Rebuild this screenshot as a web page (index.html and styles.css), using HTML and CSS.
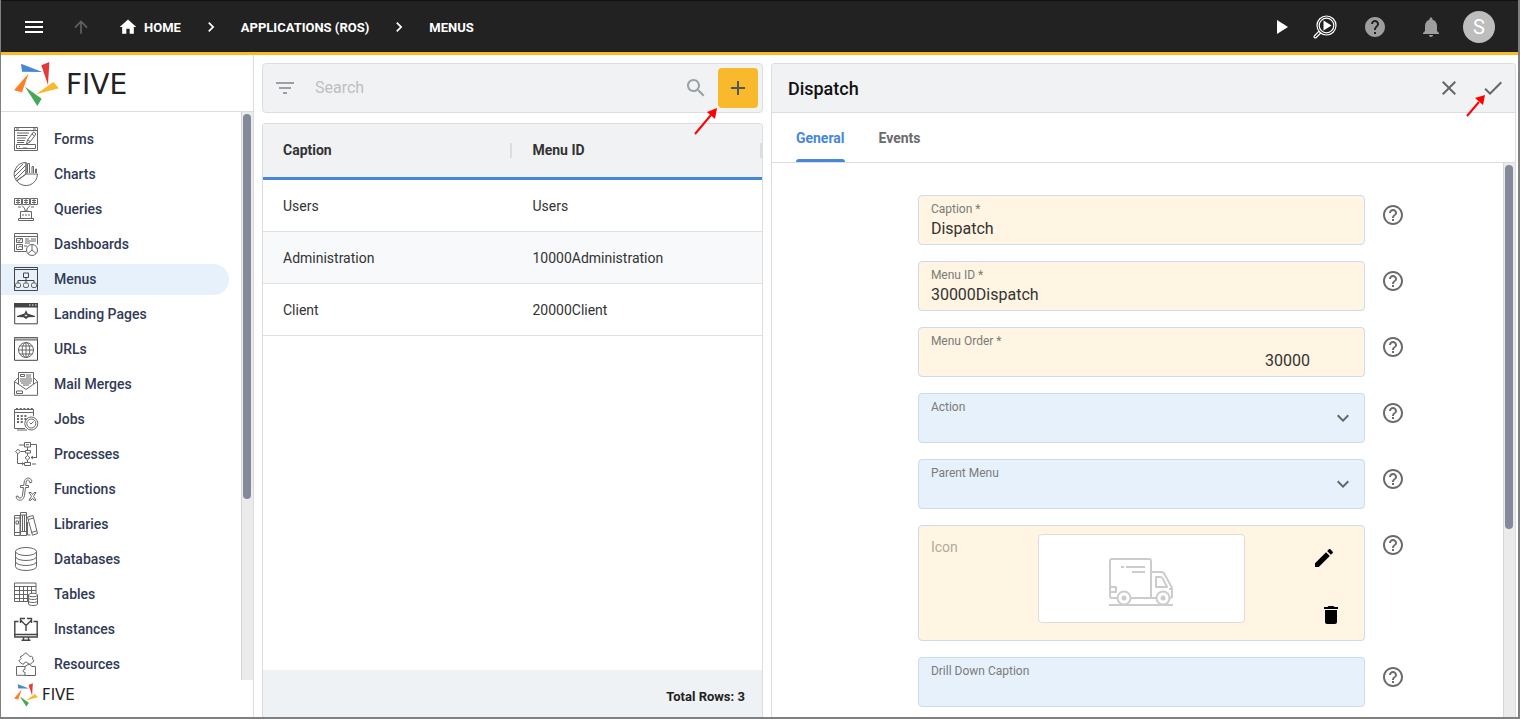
FILE: index.html
```html
<!DOCTYPE html>
<html lang="en">
<head>
<meta charset="utf-8">
<meta name="viewport" content="width=device-width, initial-scale=1">
<title>Five - Menus</title>
<link rel="stylesheet" href="styles.css">
</head>
<body>
<svg class="defs" aria-hidden="true">
  <symbol id="help" viewBox="0 0 24 24"><path d="M11 18h2v-2h-2v2zm1-16C6.48 2 2 6.48 2 12s4.480 10 10 10 10-4.480 10-10S17.520 2 12 2zm0 18c-4.410 0-8-3.590-8-8s3.590-8 8-8 8 3.590 8 8-3.590 8-8 8zm0-14c-2.210 0-4 1.790-4 4h2c0-1.100.9-2 2-2s2 .9 2 2c0 2-3 1.750-3 5h2c0-2.250 3-2.500 3-5 0-2.210-1.790-4-4-4z"/></symbol>
  <symbol id="next" viewBox="0 0 24 24"><path d="M10 6 8.590 7.410 13.170 12l-4.580 4.590L10 18l6-6z"/></symbol>
  <symbol id="down" viewBox="0 0 24 24"><path d="M7.410 8.590 12 13.170l4.590-4.580L18 10l-6 6-6-6z"/></symbol>
  <symbol id="mark" viewBox="42 186 135 132">
    <path fill="#4587d9" d="M63 191l64 25-61-1z"/><path fill="#e53935" d="M124 196l24-10-4 69z"/>
    <path fill="#f8b92c" d="M108 283l52-37 17 19z"/><path fill="#43a958" d="M75 260l50 36-13 22z"/>
    <path fill="#ff7f27" d="M86 220l-20 57-24-6z"/>
  </symbol>
</svg>
<div class="app">
  <header class="topbar">
    <button class="icon-btn" aria-label="Menu"><svg class="i24" viewBox="0 0 24 24"><path d="M3 18h18v-2H3zm0-5h18v-2H3zm0-7v2h18V6z"/></svg></button>
    <button class="icon-btn up" aria-label="Up"><svg class="i20" viewBox="0 0 24 24"><path d="m4 12 1.410 1.410L11 7.830V20h2V7.830l5.580 5.590L20 12l-8-8z"/></svg></button>
    <nav class="crumbs" aria-label="Breadcrumb">
      <a href="#" class="home"><svg class="i20" viewBox="0 0 24 24"><path d="M10 20v-6h4v6h5v-8h3L12 3 2 12h3v8z"/></svg>HOME</a>
      <svg class="i20"><use href="#next"/></svg>
      <a href="#">APPLICATIONS (ROS)</a>
      <svg class="i20"><use href="#next"/></svg>
      <a href="#">MENUS</a>
    </nav>
    <div class="tools">
      <button class="icon-btn" aria-label="Run"><svg class="i24" viewBox="0 0 24 24"><path d="M8 5v14l11-7z"/></svg></button>
      <button class="icon-btn" aria-label="Inspect"><svg class="i24" viewBox="0 0 24 24"><g fill="none" stroke="#fff"><circle cx="13.500" cy="10.500" r="9.500" stroke-width="1.200"/><circle cx="13.500" cy="10.500" r="7.300" stroke-width="1.200"/><path d="M6 16.200 1.300 21c-.8 1 .7 2.500 1.700 1.700L7.800 18" stroke-width="1.200"/></g><path d="M10.500 5.500v10l8-5z"/></svg></button>
      <button class="icon-btn help-btn" aria-label="Help"><svg class="i24" viewBox="0 0 24 24"><path d="M12 2C6.480 2 2 6.480 2 12s4.480 10 10 10 10-4.480 10-10S17.520 2 12 2zm1 17h-2v-2h2v2zm2.070-7.750-.9.920C13.450 12.900 13 13.500 13 15h-2v-.5c0-1.100.45-2.100 1.170-2.830l1.240-1.260c.37-.36.590-.86.590-1.410 0-1.100-.9-2-2-2s-2 .9-2 2H8c0-2.210 1.790-4 4-4s4 1.790 4 4c0 .88-.36 1.680-.93 2.250z"/></svg></button>
      <button class="icon-btn bell" aria-label="Notifications"><svg class="i24" viewBox="0 0 24 24"><path d="M12 22c1.100 0 2-.9 2-2h-4c0 1.100.89 2 2 2zm6-6v-5c0-3.070-1.640-5.640-4.500-6.320V4c0-.83-.67-1.500-1.500-1.500s-1.500.67-1.500 1.500v.68C7.630 5.360 6 7.920 6 11v5l-2 2v1h16v-1z"/></svg></button>
      <button class="avatar" aria-label="Account">S</button>
    </div>
  </header>

  <div class="body">
    <aside class="side">
      <a class="brand" href="#"><svg class="brand-mark"><use href="#mark"/></svg><span>FIVE</span></a>
      <div class="scroll-row">
        <nav class="nav" aria-label="Application">
          <a href="#"><svg viewBox="0 0 24 24"><path d="M.5.500h23v23H.500zM.500 3.500h23M2 2h3M19 2h3M2.500 17.500h19v4h-19zM3 6h12M3 8.500h10.500M3 11h9M3 13.500h8M3 15.500h7M12.500 17l1-4 6-8 2.500 2-6 8zM18 7l2.500 2M14 13l2 1.500M5 19.500h1M9 21h4"/></svg>Forms</a>
          <a href="#"><svg viewBox="0 0 24 24"><path d="M12 .5A11.500 11.500 0 0 0 2.500 18.800L12 12zM12 12h11.500A11.500 11.500 0 0 1 2.800 19zM1 10l8-8M1 14 11.500 3.500M2 17l9.500-9.500M13.500 11V1.500h2V11M18 11V4.500h1.500V11M21.500 11V7h1v4M12 12V.500"/></svg>Charts</a>
          <a href="#"><svg viewBox="0 0 24 24"><path d="M.5 1.500h7v6h-7zM8.500 1.500h7v6h-7zM16.500 1.500h7v6h-7zM2 3.500h4M10 3.500h4M18 3.500h4M2 5.500h4M10 5.500h4M18 5.500h4M4 1v7M12 1v7M20 1v7M8 8.500l3 3.500v2h2v-2l3-3.500M6.500 14.500h11v7h-11zM4.500 21.500h15v2h-15zM8 18h2M11 18h2M14 18h2M4 10h3M17 10h3"/></svg>Queries</a>
          <a href="#"><svg viewBox="0 0 24 24"><path d="M12 19.500H.500v-18h23v11M.500 4.500h23M2.500 6.500h6v4h-6zM2.500 12.500h6v5h-6zM3.500 8l1.500 1.500L8 6M4 15.500l2-1.500 2 1M11 7h4M17 7h5M11 9h11M11 11h5M10 14h3"/><circle cx="18" cy="18" r="5.500"/><path d="M18 12.500V18l-4 3.500M18 18l4 3.500"/></svg>Dashboards</a>
          <a href="#" class="active" aria-current="page"><svg viewBox="0 0 24 24"><path class="strong" d="M.5.500h23v23H.500zM0 2.500h24"/><path class="strong" d="M9.500 6h5v4.500h-5zM12 10.500V16M4 16v-2.500h16V16"/><rect x="1.500" y="16" width="5" height="4.500" rx="1.500"/><rect x="9.500" y="16" width="5" height="4.500" rx="1.500"/><rect x="17.500" y="16" width="5" height="4.500" rx="1.500"/></svg>Menus</a>
          <a href="#"><svg viewBox="0 0 24 24"><path class="strong" d="M.7 1.500h22.600v20.300H.7z"/><path class="solid" d="M0 1h24v4.500H0z"/><path stroke="#fff" d="M15 3h1.500M18 3h1.500M21 3h1.500"/><path class="solid" d="m12 8 1.500 3.500L21 14v1l-6.500.3L12 17l-2.500-1.700L3 15v-1l7.500-2.500z"/><circle cx="12" cy="13.500" r="1.200" fill="#fff"/></svg>Landing Pages</a>
          <a href="#"><svg viewBox="0 0 24 24"><path class="strong" d="M.5.500h23v22.800H.500z"/><path fill="#bbb" d="M.5.500h23v2.500H.500z"/><circle cx="12" cy="13" r="7.500"/><ellipse cx="12" cy="13" rx="3.800" ry="7.500"/><path d="M12 5.500v15M4.500 13h15M6 9h12M6 17h12"/></svg>URLs</a>
          <a href="#"><svg viewBox="0 0 24 24"><path d="M4.500 12V.500h15V12M.500 9.500v13.800h23V9.500L12 17.500zM.500 9.500l4-4M23.500 9.500l-4-4M2.500 19h6v2.500h-6zM6.500 2.500h4v2h-4zM12 3h5M12 5h5M6 7h12M6 9h12M7 11h10M9 13h6"/></svg>Mail Merges</a>
          <a href="#"><svg viewBox="0 0 24 24"><path d="M11 21.500H.500v-19h19V9M.500 5.500h19M3 23h10"/><path stroke-width="2" stroke-dasharray="2 1.700" d="M3 9h11M3 12h10M3 15h7M2 2h17"/><circle cx="17.300" cy="16.500" r="6.500"/><circle cx="17.300" cy="16.500" r="4.500"/><path d="M15.500 15.500l1.500 1.500 2.500-2.500"/></svg>Jobs</a>
          <a href="#"><svg viewBox="0 0 24 24"><path d="M10.500.500h6v4.500h-6zM12 2.700h3M5 3h5M17 2.500h5.500v13H19M13.500 5v3.500M11.500 8.500h5v2.500h-5zM6.500 9.500h5M4 7.300 6.300 9.500 4 11.800 1.500 9.500zM13.500 11v2.500M13.500 13.500l2.500 2.300-2.500 2.200-2.500-2.200zM17 15.500h6M13.500 18v2M10.500 20.500h6v3h-6zM3.500 12v9.500H10M18 22h4M19 14l-2 1.500 2 1.500M8 20.500l1.500 1.200L8 23"/></svg>Processes</a>
          <a href="#"><svg viewBox="0 0 24 24"><path d="M17.500 5.500c1.600-4.500-6-7-7.300-.5L9.700 8.500H6.500v2h3L8.500 18c-.5 4-4.500 4-4.300 1.200H2.300c-.7 5 7.200 6.200 8.200-.9l1-7.800h3v-2h-2.800l.5-3.400c.6-3.500 3.400-2.500 3.300.4zM15 15.500h2l1.500 2 1.500-2h2l-2.500 3.800 2.500 3.900h-2l-1.500-2-1.500 2h-2l2.500-3.900z"/></svg>Functions</a>
          <a href="#"><svg viewBox="0 0 24 24"><path d="M.5 3.500h5.500v20H.500zM6.500.500h6v23h-6zM13.500 5l5.500-1.500 4.500 18-5 1.700zM.500 6h5.500M.500 20.500h5.500M2 9h2.500v3H2zM6.500 3h6M6.500 19.500h6M8.500 3v16.500M10.500 3v16.500M14.200 7.500l5.500-1.500M17.500 20.500l5.500-1.700M13.500 10v13h3"/></svg>Libraries</a>
          <a href="#"><svg viewBox="0 0 24 24"><ellipse cx="12" cy="4.500" rx="10.500" ry="4"/><path d="M1.500 4.500v15c0 5.300 21 5.300 21 0v-15M1.500 9.500c0 5.300 21 5.300 21 0M1.500 14.500c0 5.300 21 5.300 21 0"/></svg>Databases</a>
          <a href="#"><svg viewBox="0 0 24 24"><path d="M14 19.500H.500V1h21.500v10M.500 4.500h21.500M5.500 4.500v15M9.500 4.500v15M13.500 4.500v15M17.500 4.500V11M.500 8.500h21.500M.500 12.500h14M.500 16.500h14"/><ellipse cx="19" cy="13" rx="4.500" ry="1.800"/><path d="M14.500 13v9c0 2 9 2 9 0v-9M14.500 16c0 2 9 2 9 0M14.500 19c0 2 9 2 9 0"/></svg>Tables</a>
          <a href="#"><svg viewBox="0 0 24 24"><path class="strong" stroke-width="1.400" d="M4.500 4.500H.800v15.500h22.400V4.500h-3.700M0 17.500h24M9.500 20v3M14.500 20v3M7.500 23.300h9M12 14V8.500L7 3.500M12 8.500l5-5M6.500 6V1.500H11M17.500 6V1.500H13"/></svg>Instances</a>
          <a href="#"><svg viewBox="0 0 24 24"><path d="M12 .7 16 4.500c2-1 3.500 1 2.500 2.500l1.500 2-3.500 3H14c.3-2.500-4.300-2.500-4 0H8L4.700 9l2.500-2.500L6 5l2-1z"/><path d="M2.500 14.500H11v3c-2.500-.8-2.500 3.500 0 2.800v3H2.500zM11 14.500l4-2.500 3 2.500h3.500v9H11"/></svg>Resources</a>
        </nav>
        <div class="track" aria-hidden="true"><div class="thumb side-thumb"></div></div>
      </div>
      <div class="side-foot"><svg class="foot-mark"><use href="#mark"/></svg><span>FIVE</span></div>
    </aside>

    <main class="main">
      <section class="list">
        <div class="search">
          <button class="icon-btn filter" aria-label="Filter"><svg class="i24" viewBox="0 0 24 24"><path d="M10 18h4v-2h-4zM3 6v2h18V6zm3 7h12v-2H6z"/></svg></button>
          <input type="search" placeholder="Search" aria-label="Search">
          <svg class="i24 find" viewBox="0 0 24 24"><path d="M15.500 14h-.79l-.28-.27C15.410 12.590 16 11.110 16 9.500 16 5.910 13.090 3 9.500 3S3 5.910 3 9.500 5.910 16 9.500 16c1.610 0 3.090-.59 4.230-1.570l.27.28v.79l5 4.990L20.490 19zm-6 0C7.010 14 5 11.990 5 9.500S7.010 5 9.500 5 14 7.010 14 9.500 11.990 14 9.500 14z"/></svg>
          <div class="add-wrap">
            <button class="add" aria-label="Add menu"><svg class="i24" viewBox="0 0 24 24"><path d="M19 13h-6v6h-2v-6H5v-2h6V5h2v6h6z"/></svg></button>
            <svg class="pointer add-pointer" viewBox="0 0 24 28" aria-hidden="true"><path d="M1 27 17 8" stroke="red" stroke-width="2"/><path d="M23 1l-2 11-8-7z" fill="red"/></svg>
          </div>
        </div>
        <div class="card">
          <table>
            <thead><tr><th scope="col"><span>Caption</span></th><th scope="col"><span>Menu ID</span></th></tr></thead>
            <tbody>
              <tr><td>Users</td><td>Users</td></tr>
              <tr><td>Administration</td><td>10000Administration</td></tr>
              <tr><td>Client</td><td>20000Client</td></tr>
            </tbody>
          </table>
          <div class="total">Total Rows: 3</div>
        </div>
      </section>

      <section class="detail">
        <div class="detail-head">
          <h1>Dispatch</h1>
          <button class="icon-btn" aria-label="Cancel"><svg class="i24" viewBox="0 0 24 24"><path d="M19 6.410 17.590 5 12 10.590 6.410 5 5 6.410 10.590 12 5 17.590 6.410 19 12 13.410 17.590 19 19 17.590 13.410 12z"/></svg></button>
          <div class="save-wrap">
            <button class="icon-btn" aria-label="Save"><svg class="i24" viewBox="0 0 24 24"><path d="M9 16.170 4.830 12l-1.420 1.410L9 19 21 7l-1.410-1.410z"/></svg></button>
            <svg class="pointer save-pointer" viewBox="0 0 22 24" aria-hidden="true"><path d="M2 22 14 8" stroke="red" stroke-width="2"/><path d="M20 1l-2 10-8-7z" fill="red"/></svg>
          </div>
        </div>
        <div class="tabs" role="tablist">
          <button role="tab" aria-selected="true">General</button>
          <button role="tab" aria-selected="false">Events</button>
        </div>
        <div class="scroll-row">
          <form class="form">
            <div class="row">
              <div class="field need"><label for="caption">Caption *</label><input id="caption" type="text" value="Dispatch"></div>
              <button type="button" class="icon-btn hint" aria-label="Help on Caption"><svg class="i24"><use href="#help"/></svg></button>
            </div>
            <div class="row">
              <div class="field need"><label for="menuid">Menu ID *</label><input id="menuid" type="text" value="30000Dispatch"></div>
              <button type="button" class="icon-btn hint" aria-label="Help on Menu ID"><svg class="i24"><use href="#help"/></svg></button>
            </div>
            <div class="row">
              <div class="field need"><label for="order">Menu Order *</label><input id="order" class="num" type="text" inputmode="numeric" value="30000"></div>
              <button type="button" class="icon-btn hint" aria-label="Help on Menu Order"><svg class="i24"><use href="#help"/></svg></button>
            </div>
            <div class="row">
              <div class="field"><label for="action">Action</label><select id="action"><option></option></select><svg class="i24 caret"><use href="#down"/></svg></div>
              <button type="button" class="icon-btn hint" aria-label="Help on Action"><svg class="i24"><use href="#help"/></svg></button>
            </div>
            <div class="row">
              <div class="field"><label for="parent">Parent Menu</label><select id="parent"><option></option></select><svg class="i24 caret"><use href="#down"/></svg></div>
              <button type="button" class="icon-btn hint" aria-label="Help on Parent Menu"><svg class="i24"><use href="#help"/></svg></button>
            </div>
            <div class="row">
              <div class="field need picture">
                <span class="picture-label">Icon</span>
                <div class="preview">
                  <svg viewBox="0 0 64 48" role="img" aria-label="Delivery truck"><g fill="none" stroke="#ccc" stroke-width="2" stroke-linejoin="round"><path d="M8 40H3q-2 0-2-2V3q0-2 2-2h37q2 0 2 2v37H22M42 14h10q3 0 4 3l6 11q1 1 1 3v7q0 2-2 2M47 19h5q1 0 2 2l4 8H47zM42 40h5M1 29h6v5H1M60 31h3"/><circle cx="15" cy="40" r="6.500"/><circle cx="54" cy="40" r="6.500"/><path d="M0 47h64M12 9h3M17 9h19M23 14h13"/></g><g fill="#ccc"><circle cx="15" cy="40" r="2.500"/><circle cx="54" cy="40" r="2.500"/></g></svg>
                </div>
                <div class="picture-tools">
                  <button type="button" class="icon-btn" aria-label="Edit icon"><svg class="i24" viewBox="0 0 24 24"><path d="M3 17.250V21h3.750L17.810 9.940l-3.750-3.750zM20.710 7.040c.39-.39.390-1.020 0-1.410l-2.340-2.340c-.39-.39-1.020-.39-1.410 0l-1.830 1.830 3.750 3.750z"/></svg></button>
                  <button type="button" class="icon-btn" aria-label="Delete icon"><svg class="i24" viewBox="0 0 24 24"><path d="M6 19c0 1.100.9 2 2 2h8c1.100 0 2-.9 2-2V7H6zM19 4h-3.500l-1-1h-5l-1 1H5v2h14z"/></svg></button>
                </div>
              </div>
              <button type="button" class="icon-btn hint" aria-label="Help on Icon"><svg class="i24"><use href="#help"/></svg></button>
            </div>
            <div class="row">
              <div class="field"><label for="drill">Drill Down Caption</label><input id="drill" type="text"></div>
              <button type="button" class="icon-btn hint" aria-label="Help on Drill Down Caption"><svg class="i24"><use href="#help"/></svg></button>
            </div>
          </form>
          <div class="track" aria-hidden="true"><div class="thumb form-thumb"></div></div>
        </div>
      </section>
    </main>
  </div>
</div>
</body>
</html>
```
FILE: styles.css
```css
* { box-sizing: border-box; }
body { margin: 0; font-family: Roboto, "Liberation Sans", sans-serif; font-size: 14px; color: #333; background: #fff; }
button, input, select { font: inherit; color: inherit; margin: 0; padding: 0; border: 0; background: none; }
button { cursor: pointer; }
a { color: inherit; text-decoration: none; }
svg { display: block; flex: none; fill: currentColor; }
.defs { position: absolute; width: 0; height: 0; }
.i24 { width: 24px; height: 24px; }
.i20 { width: 20px; height: 20px; }
.icon-btn { display: flex; flex: none; }

.app { height: 100vh; display: flex; flex-direction: column; border: solid #808080; border-width: 0 2px 2px 1px; overflow: hidden; }

.topbar { flex: none; height: 55px; display: flex; align-items: center; padding: 1px 23px 0 21px; background: #222; border-top: 1px solid #111; border-bottom: 3px solid #fbb829; color: #fff; }
.up { margin-left: 25px; color: #616161; }
.crumbs { display: flex; align-items: center; margin-left: 27px; font-size: 13px; font-weight: 700; }
.crumbs a { display: flex; align-items: center; gap: 6px; }
.crumbs > svg { margin: 0 20px; }
.tools { display: flex; align-items: center; gap: 20px; margin-left: auto; }
.help-btn { margin-left: 6px; color: #9e9e9e; }
.bell { margin-left: 12px; color: #9e9e9e; }
.avatar { width: 32px; height: 32px; border-radius: 50%; background: #bdbdbd; color: #fff; font-size: 20px; line-height: 32px; }

.body { flex: 1; min-height: 0; display: flex; }
.side { flex: none; width: 253px; display: flex; flex-direction: column; border-right: 1px solid #ddd; }
.brand { flex: none; height: 57px; display: flex; align-items: center; gap: 7px; padding: 2px 0 0 13px; border-bottom: 1px solid #ddd; color: #222; font: 28px "DejaVu Sans", sans-serif; }
.brand-mark { width: 45px; height: 44px; }
.scroll-row { flex: 1; min-height: 0; display: flex; }
.nav { flex: 1; display: flex; flex-direction: column; gap: 4px; padding: 12px 12px 0 0; overflow: hidden; }
.nav a { flex: none; height: 31px; display: flex; align-items: center; gap: 16px; padding: 0 0 1px 13px; border-radius: 0 16px 16px 0; color: #313a55; font-weight: 500; }
.nav .active { background: #e7f1fc; }
.nav svg { width: 24px; height: 24px; fill: none; stroke: #666; overflow: visible; }
.nav .strong { stroke: #444; }
.nav .solid { fill: #444; stroke: none; }
.track { flex: none; width: 12px; padding: 2px 0 0 1px; background: #ebebeb; border-left: 1px solid #d5d5d5; }
.thumb { width: 8px; border-radius: 4px; background: #848a9b; }
.side-thumb { height: 68%; }
.form-thumb { height: 66%; }
.side-foot { flex: none; height: 37px; display: flex; align-items: flex-start; gap: 4px; padding: 3px 0 0 13px; color: #222; font: 15px/24px "DejaVu Sans", sans-serif; }
.foot-mark { width: 24px; height: 24px; }

.main { flex: 1; min-width: 0; display: grid; grid-template-columns: minmax(0, 402fr) minmax(0, 598fr); gap: 8px; padding: 8px 2px 0 8px; }
.list { min-height: 0; display: flex; flex-direction: column; gap: 10px; }
.search { flex: none; height: 50px; display: flex; align-items: center; padding: 0 4px 0 10px; background: #f1f2f4; border: 1px solid #ddd; border-radius: 4px; }
.filter { color: #9aa0a6; }
.search input { flex: 1; min-width: 0; height: 40px; padding-bottom: 2px; margin-left: 18px; font-size: 16px; outline: 0; }
.search input::placeholder { color: #bdbfc2; opacity: 1; }
.find { margin-right: 10px; color: #9aa0a6; }
.add-wrap, .save-wrap { position: relative; }
.add { width: 40px; height: 40px; display: grid; place-items: center; border-radius: 4px; background: #f8b92c; color: #555; }
.pointer { position: absolute; pointer-events: none; }
.add-pointer { width: 24px; height: 28px; right: 40px; top: 39px; }
.save-pointer { width: 22px; height: 24px; right: 18px; top: 18px; }

.card { flex: 1; min-height: 0; display: flex; flex-direction: column; border: 1px solid #ddd; border-bottom: 0; border-radius: 4px 4px 0 0; overflow: hidden; }
table { width: 100%; border-spacing: 0; table-layout: fixed; }
th, td { padding: 0 0 0 20px; text-align: left; }
th { height: 56px; background: #f1f2f4; border-bottom: 3px solid #4587d9; font-weight: 700; color: #333; }
th span { display: block; border-right: 2px solid #ddd; line-height: 15px; }
td { height: 52px; border-bottom: 1px solid #e0e0e0; }
tbody tr:nth-child(even) { background: #f8f9fb; }
.total { margin-top: auto; height: 47px; padding-right: 17px; background: #eff2f4; text-align: right; font-size: 13px; font-weight: 700; line-height: 53px; color: #222; }

.detail { min-height: 0; display: flex; flex-direction: column; border: 1px solid #ddd; border-bottom: 0; border-radius: 4px 4px 0 0; overflow: hidden; }
.detail-head { flex: none; height: 49px; display: flex; align-items: center; padding: 0 10px 0 16px; background: #f1f2f4; border-bottom: 1px solid #ddd; color: #666; }
h1 { flex: 1; margin: 0; font-size: 18px; font-weight: 500; color: #111; }
.save-wrap { margin-left: 20px; }
.tabs { flex: none; height: 50px; display: flex; gap: 34px; padding-left: 24px; border-bottom: 1px solid #ddd; font-weight: 700; color: #6b6b6b; }
.tabs button { position: relative; }
.tabs [aria-selected="true"] { color: #4587d9; }
.tabs [aria-selected="true"]::after { content: ""; position: absolute; inset: auto 0 0; height: 3px; border-radius: 3px 3px 0 0; background: #4587d9; }
.form { flex: 1; min-width: 0; display: flex; flex-direction: column; gap: 16px; padding: 32px 98px 0 146px; overflow: hidden; }
.row { flex: none; display: flex; gap: 16px; align-items: flex-start; }
.field { position: relative; flex: 1; min-width: 0; min-height: 50px; padding: 6px 12px 0; display: flex; flex-direction: column; background: #e7f1fc; border: 1px solid #ccdcec; border-radius: 4px; }
.need { background: #fff5e2; }
.field label { font-size: 12px; line-height: 14px; color: #7b7b7b; }
.field input, .field select { width: 100%; height: 24px; font-size: 16px; outline: 0; appearance: none; }
.field .num { text-align: right; padding-right: 42px; }
.caret { position: absolute; right: 9px; top: 12px; color: #666; pointer-events: none; }
.hint { margin-top: 8px; color: #6b6b6b; }
.picture { flex-direction: row; height: 116px; padding: 8px 21px 0 12px; }
.picture-label { width: 107px; line-height: 27px; color: #b0aa9f; }
.preview { width: 207px; height: 89px; display: grid; place-items: center; padding-top: 7px; background: #fff; border: 1px solid #ddd; border-radius: 4px; }
.preview svg { width: 64px; height: 48px; }
.picture-tools { flex: 1; display: flex; flex-direction: column; align-items: flex-end; gap: 33px; padding-top: 12px; color: #000; }
.picture-tools button:first-child { margin-right: 7px; }
```
